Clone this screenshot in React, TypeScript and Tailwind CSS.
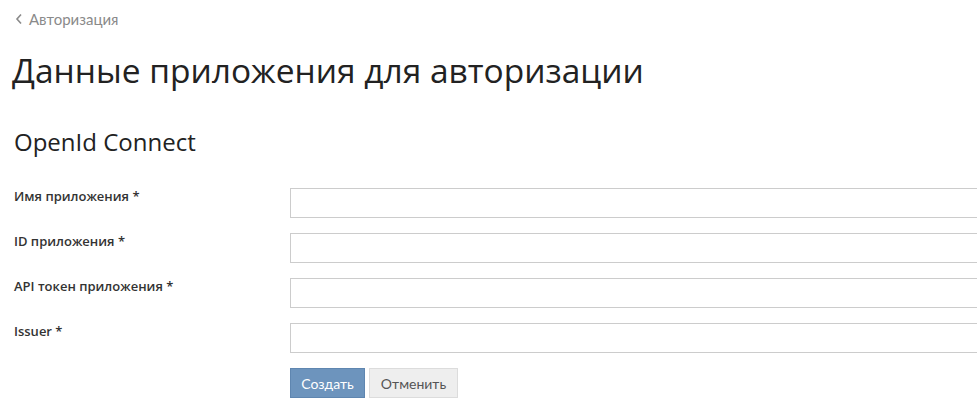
import React from "react";

const fields = ["Имя приложения *", "ID приложения *", "API токен приложения *", "Issuer *"];

export default function App() {
  return (
    <div className="w-[977px] h-[413px] overflow-hidden bg-white" style={{ fontFamily: '"Open Sans", sans-serif' }}>
      <div className="pl-[14px] pt-[9px]">
        <a className="flex items-center gap-[6px] text-[15px] leading-[20px] text-[#8a8a8a] h-[20px]" style={{ fontFamily: "Lato, sans-serif" }}>
          <svg width="8" height="12" viewBox="0 0 8 12" className="ml-[1px]">
            <path d="M6 1.5 L2 6 L6 10.5" fill="none" stroke="#8a8a8a" strokeWidth="1.6" />
          </svg>
          <span>Авторизация</span>
        </a>
        <h1 className="mt-[20px] ml-[-2px] text-[33.5px] leading-[42px] text-[#222] font-normal">
          Данные приложения для авторизации
        </h1>
        <h2 className="mt-[36px] text-[24px] leading-[30px] text-[#222] font-normal">OpenId Connect</h2>
        <div className="mt-[31px] flex flex-col gap-[15px]">
          {fields.map((f) => (
            <div key={f} className="flex items-start">
              <label className="w-[276px] shrink-0 text-[13px] leading-[16px] font-semibold text-[#333]">{f}</label>
              <div className="w-[720px] shrink-0 h-[30px] border border-[#ccc] bg-white" />
            </div>
          ))}
          <div className="flex pl-[276px] gap-[4px]">
            <button className="h-[30px] w-[75px] bg-[#6d94bd] border border-[#5f86b0] text-white text-[14px]" style={{ fontFamily: "Lato, sans-serif" }}>
              Создать
            </button>
            <button className="h-[30px] w-[89px] bg-[#eeeeee] border border-[#dcdcdc] text-[#555] text-[14px]" style={{ fontFamily: "Lato, sans-serif" }}>
              Отменить
            </button>
          </div>
        </div>
      </div>
    </div>
  );
}
